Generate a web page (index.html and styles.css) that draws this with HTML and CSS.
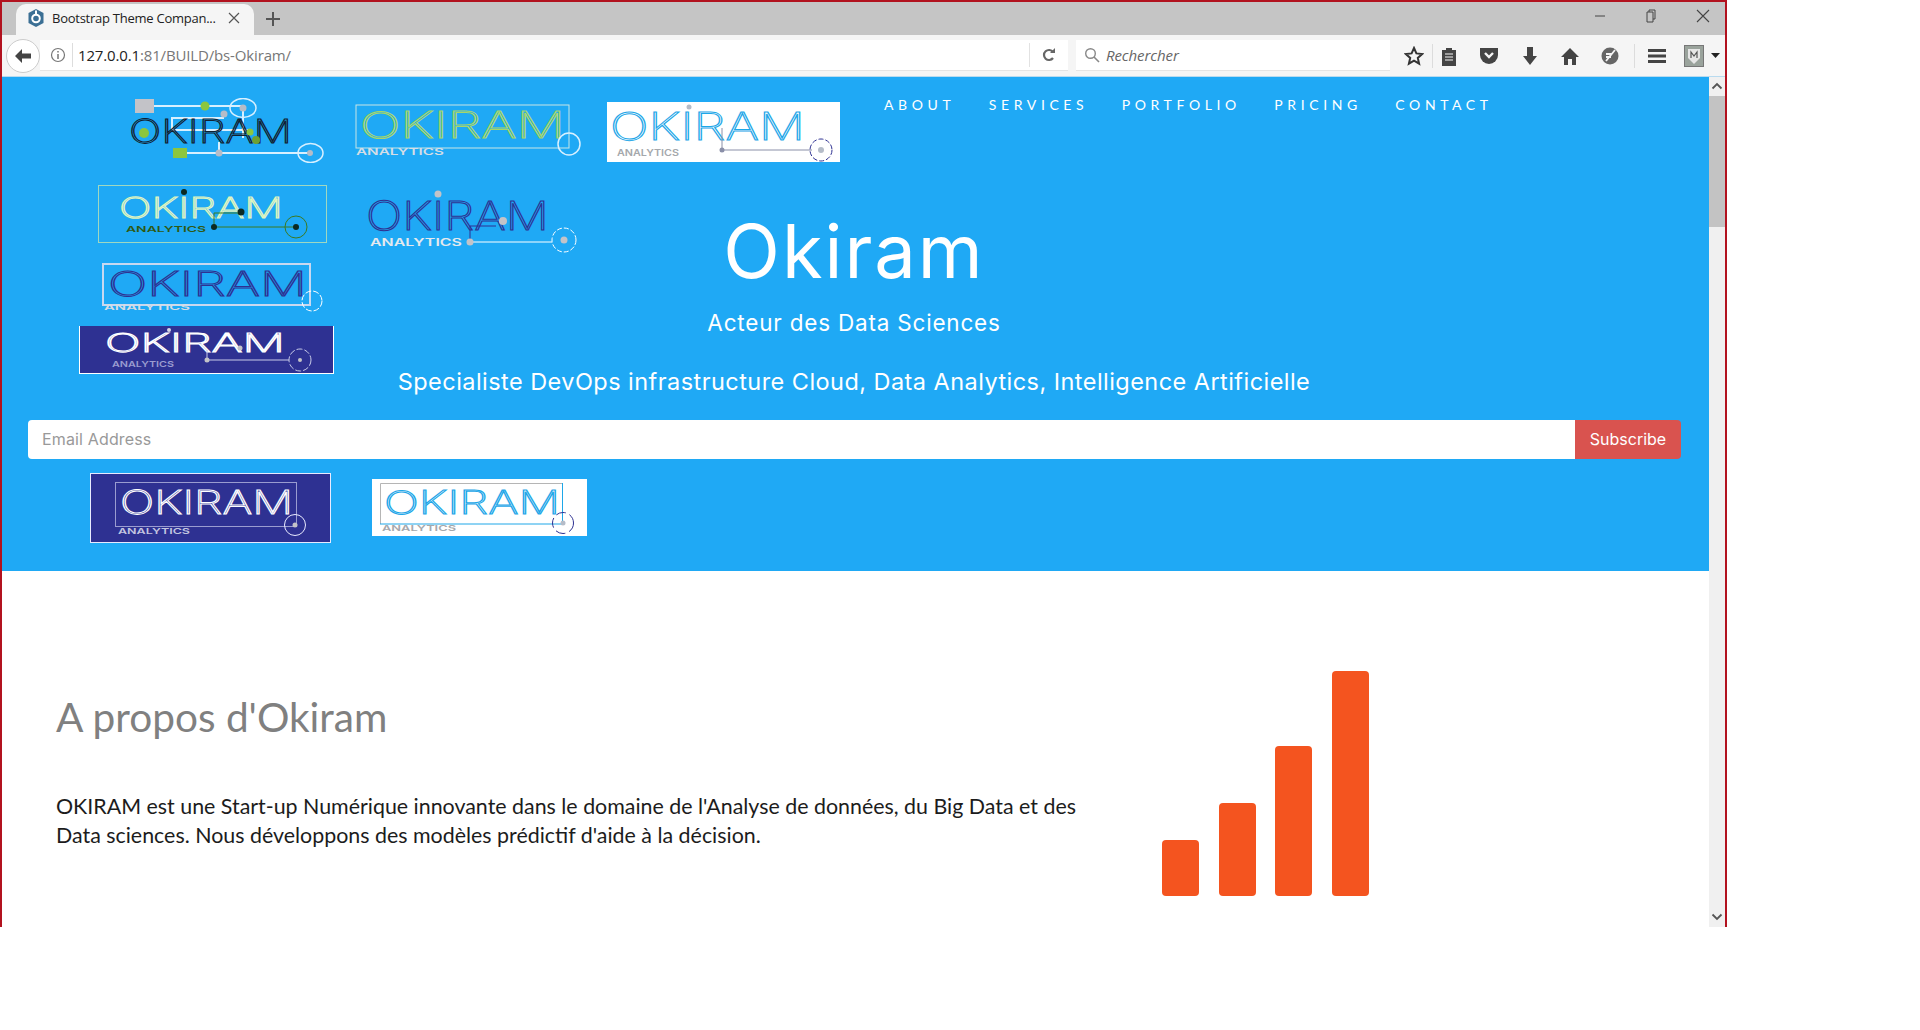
FILE: index.html
```html
<!DOCTYPE html>
<html lang="fr">
<head>
    <meta charset="UTF-8">
    <title>Bootstrap Theme Company - Okiram</title>
    <link rel="stylesheet" href="styles.css">
</head>
<body>
<div class="window">
    <!-- tabs -->
    <div class="titlebar">
        <div class="tab">
            <svg class="favicon" width="18" height="20" viewBox="0 0 18 20"><path d="M9 1l7.500 4v10L9 19l-7.500-4V5z" fill="#3b6f94"/><circle cx="9" cy="10.500" r="3.800" fill="none" stroke="#fff" stroke-width="2"/><rect x="8" y="2.500" width="2" height="4" fill="#fff"/></svg>
            <span class="tab-title">Bootstrap Theme Compan...</span>
            <svg class="tab-close" width="12" height="12" viewBox="0 0 12 12"><path d="M1 1l10 10M11 1L1 11" stroke="#555" stroke-width="1.200"/></svg>
        </div>
        <svg class="tab-new" width="16" height="16" viewBox="0 0 16 16"><path d="M8 1v14M1 8h14" stroke="#555" stroke-width="2"/></svg>
        <div class="win-buttons">
            <svg width="12" height="12" viewBox="0 0 12 12"><path d="M1 6h10" stroke="#444" stroke-width="1"/></svg>
            <svg width="12" height="14" viewBox="0 0 12 14"><path d="M4 3V1h6v9H8M2 3h6v10H2z" fill="none" stroke="#444" stroke-width="1"/></svg>
            <svg width="14" height="14" viewBox="0 0 14 14"><path d="M1 1l12 12M13 1L1 13" stroke="#444" stroke-width="1.100"/></svg>
        </div>
    </div>

    <!-- toolbar -->
    <div class="toolbar">
        <div class="back-btn">
            <svg width="18" height="16" viewBox="0 0 18 16"><path d="M8 1L1 8l7 7V10.500h9v-5H8z" fill="#444"/></svg>
        </div>
        <div class="urlbar">
            <svg class="info-icon" width="16" height="16" viewBox="0 0 16 16"><circle cx="8" cy="8" r="6.500" fill="none" stroke="#777" stroke-width="1.200"/><path d="M8 7v5M8 4v1.500" stroke="#777" stroke-width="1.500"/></svg>
            <span class="url"><b>127.0.0.1</b>:81/BUILD/bs-Okiram/</span>
            <span class="url-sep"></span>
            <svg class="reload" width="14" height="14" viewBox="0 0 14 14"><path d="M11 4a5 5 0 1 0 0 6" fill="none" stroke="#666" stroke-width="2.200"/><path d="M8 5h5V0z" fill="#666"/></svg>
        </div>
        <div class="searchbar">
            <svg width="16" height="16" viewBox="0 0 16 16"><circle cx="6.500" cy="6.500" r="4.800" fill="none" stroke="#888" stroke-width="1.400"/><path d="M10 10l5 5" stroke="#888" stroke-width="1.600"/></svg>
            <span>Rechercher</span>
        </div>
        <div class="tools">
            <svg class="t-star" width="20" height="20" viewBox="0 0 20 20"><path d="M10 2l2.400 5.400 5.800.6-4.400 3.900 1.300 5.800L10 14.700l-5.100 3 1.300-5.800L1.800 8l5.800-.6z" fill="none" stroke="#333" stroke-width="2"/></svg>
            <span class="tool-sep sep-star"></span>
            <svg class="t-clip" width="16" height="20" viewBox="0 0 16 20"><path d="M1 4h4V2h6v2h4v16H1z" fill="#444"/><path d="M4 8h8M4 11h8M4 14h8" stroke="#f5f5f5" stroke-width="1.200"/></svg>
            <svg class="t-pocket" width="20" height="18" viewBox="0 0 20 18"><path d="M1 1h18v7a9 9 0 0 1-18 0z" fill="#444"/><path d="M6 6l4 4 4-4" fill="none" stroke="#f5f5f5" stroke-width="2.400"/></svg>
            <svg class="t-down" width="16" height="18" viewBox="0 0 16 18"><path d="M5 0h6v9h4l-7 9-7-9h4z" fill="#444"/></svg>
            <svg class="t-home" width="20" height="18" viewBox="0 0 20 18"><path d="M10 1L1 10h3v8h4v-6h4v6h4v-8h3z" fill="#444"/></svg>
            <svg class="t-sync" width="20" height="20" viewBox="0 0 20 20"><circle cx="10" cy="10" r="8.500" fill="#666"/><path d="M6 15L15 4M6 8h6M6 11h5" stroke="#f5f5f5" stroke-width="1.800"/></svg>
            <span class="tool-sep sep-sync"></span>
            <svg class="t-menu" width="18" height="16" viewBox="0 0 18 16"><path d="M0 2.500h18M0 8h18M0 13.500h18" stroke="#444" stroke-width="3.200"/></svg>
            <svg class="t-avatar" width="20" height="22" viewBox="0 0 20 22"><rect x=".5" y=".5" width="19" height="21" fill="#9aa39c" stroke="#777"/><path d="M4 4h12v9l-6 6-6-6z" fill="#e6e6e6"/><path d="M7 13V7l3 4 3-4v6" fill="none" stroke="#555" stroke-width="1.200"/></svg>
            <svg class="t-caret" width="9" height="5" viewBox="0 0 9 5"><path d="M0 0h9L4.500 5z" fill="#222"/></svg>
        </div>
    </div>

    <div class="viewport">
        <div class="page">
            <header class="hero">
                <div class="hero-top">
                    <!-- logo couleur -->
                    <svg class="logo logo-1" width="194" height="65" viewBox="0 0 194 65">
                        <rect x="5" y="1" width="19" height="14" fill="#c3c3c8"/>
                        <path d="M24 8h89M113 10v30M42 32V20h52M42 32h80M89 55V44M57 55h123" fill="none" stroke="#d8f0ff" stroke-width="2"/>
                        <circle cx="75" cy="8" r="4.500" fill="#8cc63f"/>
                        <ellipse cx="113" cy="10" rx="13" ry="9.500" fill="none" stroke="#d8f0ff" stroke-width="1.500"/>
                        <circle cx="113" cy="10" r="3.500" fill="#b5bcc8"/>
                        <circle cx="94" cy="16" r="3.500" fill="#b5bcc8"/>
                        <text class="mark" x="-1" y="45" textLength="163" lengthAdjust="spacingAndGlyphs" font-size="33" stroke="#12202e">OKIRAM</text>
                        <circle cx="14" cy="35" r="5" fill="#8cc63f"/>
                        <circle cx="120" cy="34" r="3.500" fill="#8cc63f"/>
                        <circle cx="126" cy="42" r="4" fill="#6fa030"/>
                        <rect x="43" y="50" width="14" height="10" fill="#8cc63f"/>
                        <circle cx="89" cy="55" r="3.500" fill="#b5bcc8"/>
                        <ellipse cx="180.500" cy="55" rx="12.500" ry="9.500" fill="none" stroke="#d8f0ff" stroke-width="1.500"/>
                        <circle cx="180" cy="55" r="3" fill="#b5bcc8"/>
                    </svg>
                    <!-- logo vert -->
                    <svg class="logo logo-2" width="227" height="53" viewBox="0 0 227 53">
                        <rect x="1" y="1" width="213" height="43" fill="none" stroke="#c8e6e6"/>
                        <text class="mark" x="5" y="34" textLength="205" lengthAdjust="spacingAndGlyphs" font-size="36" stroke="#a6d66a">OKIRAM</text>
                        <text class="sub" x="1" y="51" textLength="88" lengthAdjust="spacingAndGlyphs" font-size="9" fill="#d5dde5">ANALYTICS</text>
                        <circle cx="214" cy="40" r="11" fill="none" stroke="#d8f0ff" stroke-width="1.500"/>
                    </svg>
                    <!-- logo fond blanc -->
                    <svg class="logo logo-3" width="233" height="60" viewBox="0 0 233 60">
                        <rect width="233" height="60" fill="#fff"/>
                        <text class="mark" x="3" y="38" textLength="195" lengthAdjust="spacingAndGlyphs" font-size="38" stroke="#1ea7e8">OKIRAM</text>
                        <text class="sub" x="10" y="54" textLength="62" lengthAdjust="spacingAndGlyphs" font-size="9" fill="#a5a8ac">ANALYTICS</text>
                        <path d="M115 26v22M115 48h90" fill="none" stroke="#8a8fa8"/>
                        <circle cx="115" cy="48" r="2.500" fill="#8a8fa8"/>
                        <circle cx="214" cy="48" r="11" fill="none" stroke="#2e3192" stroke-dasharray="5 2"/>
                        <circle cx="214" cy="48" r="3" fill="#b5bcc8"/>
                        <circle cx="82" cy="5" r="2.500" fill="#b5bcc8"/>
                    </svg>
                    <nav class="nav">
                        <a>ABOUT</a>
                        <a>SERVICES</a>
                        <a>PORTFOLIO</a>
                        <a>PRICING</a>
                        <a>CONTACT</a>
                    </nav>
                </div>

                <div class="hero-main">
                    <div class="logo-stack">
                        <svg class="logo logo-4" width="229" height="58" viewBox="0 0 229 58">
                            <rect x=".5" y=".5" width="228" height="57" fill="none" stroke="#9fd8c0"/>
                            <text class="mark" x="21" y="33" textLength="164" lengthAdjust="spacingAndGlyphs" font-size="29" stroke="#e0f5c0">OKIRAM</text>
                            <text class="sub" x="28" y="47" textLength="80" lengthAdjust="spacingAndGlyphs" font-size="8" fill="#2f5a12">ANALYTICS</text>
                            <path d="M116 42h82M116 42V28h26" fill="none" stroke="#3d7a20"/>
                            <circle cx="86" cy="7" r="3" fill="#0c2a22"/>
                            <circle cx="116" cy="42" r="3" fill="#0c2a22"/>
                            <circle cx="143" cy="27" r="3.500" fill="#0c2a22"/>
                            <circle cx="198" cy="42" r="11" fill="none" stroke="#3d7a20"/>
                            <circle cx="198" cy="42" r="3" fill="#0c2a22"/>
                        </svg>
                        <svg class="logo logo-6" width="224" height="49" viewBox="0 0 224 49">
                            <rect x="1" y="1" width="207" height="41" fill="none" stroke="#c8d8f0" stroke-width="2"/>
                            <text class="mark" x="6" y="33" textLength="199" lengthAdjust="spacingAndGlyphs" font-size="34" stroke="#2e3192">OKIRAM</text>
                            <text class="sub" x="2" y="47" textLength="86" lengthAdjust="spacingAndGlyphs" font-size="8" fill="#d5dde5">ANALYTICS</text>
                            <circle cx="210" cy="38" r="10" fill="none" stroke="#fff" stroke-dasharray="6 2"/>
                        </svg>
                        <svg class="logo logo-7" width="255" height="48" viewBox="0 0 255 48">
                            <rect width="255" height="48" fill="#2e3192"/>
                            <path d="M.5 0v48M254.500 0v48M0 47.500h255" fill="none" stroke="#fff"/>
                            <text class="mark" x="26" y="26" textLength="180" lengthAdjust="spacingAndGlyphs" font-size="26" stroke="#fff">OKIRAM</text>
                            <text class="sub" x="33" y="41" textLength="62" lengthAdjust="spacingAndGlyphs" font-size="8" fill="#9a9cd0">ANALYTICS</text>
                            <path d="M128 24v10M128 34h82" fill="none" stroke="#c8cbe8"/>
                            <circle cx="90" cy="4" r="2" fill="#d5d8e8"/>
                            <circle cx="128" cy="34" r="2.500" fill="#c3c3c8"/>
                            <circle cx="161" cy="22" r="2.500" fill="#c3c3c8"/>
                            <circle cx="221" cy="34" r="11" fill="none" stroke="#c8cbe8" stroke-dasharray="6 2"/>
                            <circle cx="221" cy="34" r="2" fill="#c3c3c8"/>
                        </svg>
                    </div>
                    <div class="hero-text">
                        <svg class="logo logo-5" width="214" height="63" viewBox="0 0 214 63">
                            <text class="mark" x="2" y="40" textLength="183" lengthAdjust="spacingAndGlyphs" font-size="40" stroke="#2e3192">OKIRAM</text>
                            <text class="sub" x="6" y="56" textLength="92" lengthAdjust="spacingAndGlyphs" font-size="10" fill="#e5e9ee">ANALYTICS</text>
                            <path d="M106 52V36h26" fill="none" stroke="#2e3192"/>
                            <path d="M106 52h82" fill="none" stroke="#fff"/>
                            <circle cx="74" cy="4" r="3.500" fill="#c3c3c8"/>
                            <circle cx="106" cy="52" r="3.500" fill="#c3c3c8"/>
                            <circle cx="139" cy="31" r="4" fill="#c3c3c8"/>
                            <circle cx="200" cy="50" r="12" fill="none" stroke="#fff" stroke-dasharray="5 2"/>
                            <circle cx="200" cy="50" r="3.500" fill="#c3c3c8"/>
                        </svg>
                        <div class="hero-titles">
                            <h1>Okiram</h1>
                            <p class="tagline">Acteur des Data Sciences</p>
                        </div>
                        <p class="speciality">Specialiste DevOps infrastructure Cloud, Data Analytics, Intelligence Artificielle</p>
                    </div>
                </div>

                <form class="subscribe">
                    <input class="email" type="text" placeholder="Email Address">
                    <button class="subscribe-btn" type="button">Subscribe</button>
                </form>

                <div class="hero-bottom">
                    <svg class="logo logo-8" width="241" height="70" viewBox="0 0 241 70">
                        <rect width="241" height="70" fill="#2e3192"/>
                        <rect x=".5" y=".5" width="240" height="69" fill="none" stroke="#e8eaff"/>
                        <rect x="25.500" y="9.500" width="181" height="44" fill="none" stroke="#9a9cd0"/>
                        <text class="mark" x="30" y="41" textLength="173" lengthAdjust="spacingAndGlyphs" font-size="33" stroke="#fff">OKIRAM</text>
                        <text class="sub" x="28" y="61" textLength="72" lengthAdjust="spacingAndGlyphs" font-size="8" fill="#c3c5e0">ANALYTICS</text>
                        <circle cx="205" cy="52" r="10.500" fill="none" stroke="#e8eaff"/>
                        <circle cx="205" cy="52" r="2.500" fill="#c3c3c8"/>
                    </svg>
                    <svg class="logo logo-9" width="215" height="57" viewBox="0 0 215 57">
                        <rect width="215" height="57" fill="#fff"/>
                        <path d="M8.500 45V4.500h182" fill="none" stroke="#b5b5b5"/>
                        <path d="M190.500 4v41H8" fill="none" stroke="#1ea7e8"/>
                        <text class="mark" x="12" y="35" textLength="176" lengthAdjust="spacingAndGlyphs" font-size="32" stroke="#1ea7e8">OKIRAM</text>
                        <text class="sub" x="10" y="52" textLength="74" lengthAdjust="spacingAndGlyphs" font-size="8" fill="#a5a8ac">ANALYTICS</text>
                        <circle cx="191" cy="44" r="10.500" fill="none" stroke="#2e3192" stroke-dasharray="10 4"/>
                        <circle cx="191" cy="44" r="2.500" fill="#b5bcc8"/>
                    </svg>
                </div>
            </header>

            <section class="about">
                <div class="about-text">
                    <h2>A propos d'Okiram</h2>
                    <p>OKIRAM est une Start-up Numérique innovante dans le domaine de l'Analyse de données, du Big Data et des Data sciences. Nous développons des modèles prédictif d'aide à la décision.</p>
                </div>
                <div class="chart">
                    <span class="bar bar-1"></span>
                    <span class="bar bar-2"></span>
                    <span class="bar bar-3"></span>
                    <span class="bar bar-4"></span>
                </div>
            </section>
        </div>

        <div class="scrollbar">
            <svg class="arrow" width="12" height="8" viewBox="0 0 12 8"><path d="M1.500 6.500L6 2l4.500 4.500" fill="none" stroke="#555" stroke-width="1.800"/></svg>
            <div class="thumb"></div>
            <svg class="arrow arrow-down" width="12" height="8" viewBox="0 0 12 8"><path d="M1.500 1.500L6 6l4.500-4.500" fill="none" stroke="#555" stroke-width="1.800"/></svg>
        </div>
    </div>
</div>
</body>
</html>
```

FILE: styles.css
```css
html, body {
    margin: 0;
    height: 100%;
    overflow: hidden;
    background: #fff;
}

.window {
    width: 1727px;
    height: 927px;
    box-sizing: border-box;
    border: 2px solid #b2121f;
    border-bottom: none;
    display: flex;
    flex-direction: column;
    font-family: "Open Sans", sans-serif;
}

/* titre + onglets */
.titlebar {
    height: 33px;
    background: #c5c5c5;
    display: flex;
    align-items: flex-end;
    flex: none;
}
.tab {
    width: 238px;
    height: 31px;
    margin-left: 14px;
    box-sizing: border-box;
    padding: 0 14px 3px 11px;
    background: #f5f5f5;
    border-radius: 10px 10px 0 0;
    display: flex;
    align-items: center;
}
.favicon {
    flex: none;
}
.tab-title {
    margin-left: 7px;
    font-size: 13px;
    color: #222;
    white-space: nowrap;
    flex: 1;
    letter-spacing: -0.25px;
}
.tab-close {
    flex: none;
}
.tab-new {
    margin: 0 0 8px 11px;
}
.win-buttons {
    margin-left: auto;
    height: 28px;
    align-self: flex-start;
    display: flex;
    align-items: center;
    gap: 39px;
    padding-right: 15px;
}

/* barre d'outils */
.toolbar {
    height: 42px;
    flex: none;
    box-sizing: border-box;
    background: #f5f5f5;
    border-bottom: 1px solid #b9dbef;
    display: flex;
    align-items: center;
}
.back-btn {
    width: 34px;
    height: 34px;
    margin-left: 4px;
    flex: none;
    box-sizing: border-box;
    border: 1px solid #ccc;
    border-radius: 50%;
    background: #fff;
    display: flex;
    align-items: center;
    justify-content: center;
}
.urlbar {
    width: 1028px;
    height: 31px;
    background: #fff;
    border-bottom: 1px solid #e4e4e4;
    box-sizing: border-box;
    display: flex;
    align-items: center;
    padding: 0 12px 0 10px;
    flex: none;
}
.url {
    margin-left: 6px;
    padding-left: 5px;
    border-left: 1px solid #ddd;
    font-size: 15px;
    line-height: 24px;
    color: #777;
    letter-spacing: -0.15px;
}
.url b {
    font-weight: 400;
    color: #222;
}
.url-sep {
    margin-left: auto;
    width: 1px;
    height: 24px;
    background: #e2e2e2;
}
.reload {
    margin-left: 12px;
}
.searchbar {
    width: 314px;
    height: 31px;
    margin-left: 8px;
    flex: none;
    background: #fff;
    border-bottom: 1px solid #e4e4e4;
    box-sizing: border-box;
    display: flex;
    align-items: center;
    gap: 6px;
    padding-left: 8px;
    font-size: 15px;
    font-style: italic;
    color: #666;
    letter-spacing: -0.1px;
}
.tools {
    display: flex;
    align-items: center;
    flex: 1;
}
.tool-sep {
    width: 1px;
    height: 24px;
    background: #dcdcdc;
    flex: none;
}
.t-star { margin-left: 14px; }
.sep-star { margin-left: 8px; }
.t-clip { margin-left: 8px; }
.t-pocket { margin-left: 22px; }
.t-down { margin-left: 23px; }
.t-home { margin-left: 22px; }
.t-sync { margin-left: 20px; }
.sep-sync { margin-left: 14px; }
.t-menu { margin-left: 13px; }
.t-avatar { margin-left: 18px; }
.t-caret { margin-left: 7px; }

/* page */
.viewport {
    flex: 1;
    display: flex;
    min-height: 0;
}
.page {
    flex: 1;
    min-width: 0;
    overflow: hidden;
}
.scrollbar {
    width: 16px;
    flex: none;
    background: #f0f0f0;
    display: flex;
    flex-direction: column;
    align-items: center;
}
.arrow {
    margin: 5px 0 6px;
    flex: none;
}
.thumb {
    width: 16px;
    height: 131px;
    background: #c3c3c3;
}
.arrow-down {
    margin: auto 0 6px;
}

/* bandeau bleu */
.hero {
    height: 494px;
    box-sizing: border-box;
    background: #1fa9f5;
    padding-top: 21px;
    color: #fff;
    font-family: Inter, sans-serif;
}
.logo {
    display: block;
    flex: none;
}
.mark {
    font-family: Inter, sans-serif;
    font-weight: 200;
    fill: none;
    stroke-width: 1;
}
.sub {
    font-family: Inter, sans-serif;
    font-weight: 600;
}
.hero-top {
    display: flex;
    align-items: center;
    height: 65px;
    padding-left: 128px;
}
.logo-2 { margin-left: 31px; }
.logo-3 { margin: 2px 0 0 25px; }
.nav {
    align-self: flex-start;
    margin: -3px 0 0 44px;
    display: flex;
    gap: 33.500px;
    font-family: Lato, sans-serif;
    font-size: 14px;
    line-height: 20px;
    letter-spacing: 4.600px;
}
.hero-main {
    margin-top: 22px;
    display: flex;
}
.logo-stack {
    width: 338px;
    flex: none;
    display: flex;
    flex-direction: column;
}
.logo-4 { margin-left: 96px; }
.logo-6 { margin: 20px 0 0 100px; }
.logo-7 { margin: 14px 0 0 77px; }
.hero-text {
    width: 1028px;
    flex: none;
    display: grid;
    grid-template-columns: 248px 532px 248px;
    grid-template-rows: 167px auto;
}
.logo-5 {
    margin: 5px 0 0 24px;
}
.hero-titles {
    text-align: center;
}
h1 {
    margin: 28px 0 0;
    font-size: 74px;
    line-height: 76px;
    font-weight: 400;
    letter-spacing: 2px;
}
.tagline {
    margin: 19px 0 0;
    font-size: 22.500px;
    line-height: 30px;
    letter-spacing: 0.8px;
}
.speciality {
    grid-column: 1 / 4;
    margin: 15px 0 0;
    text-align: center;
    font-size: 23.500px;
    line-height: 30px;
    letter-spacing: 0.45px;
}
.subscribe {
    margin: 23px 0 0 26px;
    width: 1653px;
    height: 39px;
    display: flex;
}
.email {
    flex: 1;
    min-width: 0;
    box-sizing: border-box;
    border: none;
    border-radius: 4px 0 0 4px;
    padding: 0 14px 2px;
    font-family: Inter, sans-serif;
    font-size: 16px;
    letter-spacing: 0.15px;
    background: #fff;
}
.email::placeholder {
    color: #999;
    opacity: 1;
}
.subscribe-btn {
    width: 106px;
    flex: none;
    border: none;
    border-radius: 0 4px 4px 0;
    background: #d9534f;
    color: #fff;
    font-family: Inter, sans-serif;
    font-size: 16px;
    padding: 0 0 2px;
}
.hero-bottom {
    margin: 14px 0 0 88px;
    display: flex;
    align-items: center;
    gap: 41px;
}
.logo-9 { margin-bottom: 2px; }

/* a propos */
.about {
    display: flex;
    font-family: Lato, sans-serif;
}
.about-text {
    width: 1030px;
    margin-left: 54px;
    flex: none;
}
h2 {
    margin: 120px 0 0;
    font-size: 40.600px;
    line-height: 52px;
    font-weight: 400;
    color: #808080;
}
.about-text p {
    margin: 49px 0 0;
    font-size: 21.400px;
    line-height: 29px;
    color: #1c1c1c;
}
.chart {
    margin: 100px 0 0 76px;
    height: 225px;
    display: flex;
    align-items: flex-end;
    gap: 19.500px;
}
.bar {
    width: 37px;
    background: #f4541f;
    border-radius: 4px;
}
.bar-1 { height: 56px; }
.bar-2 { height: 93px; }
.bar-3 { height: 150px; }
.bar-4 { height: 225px; }
```
